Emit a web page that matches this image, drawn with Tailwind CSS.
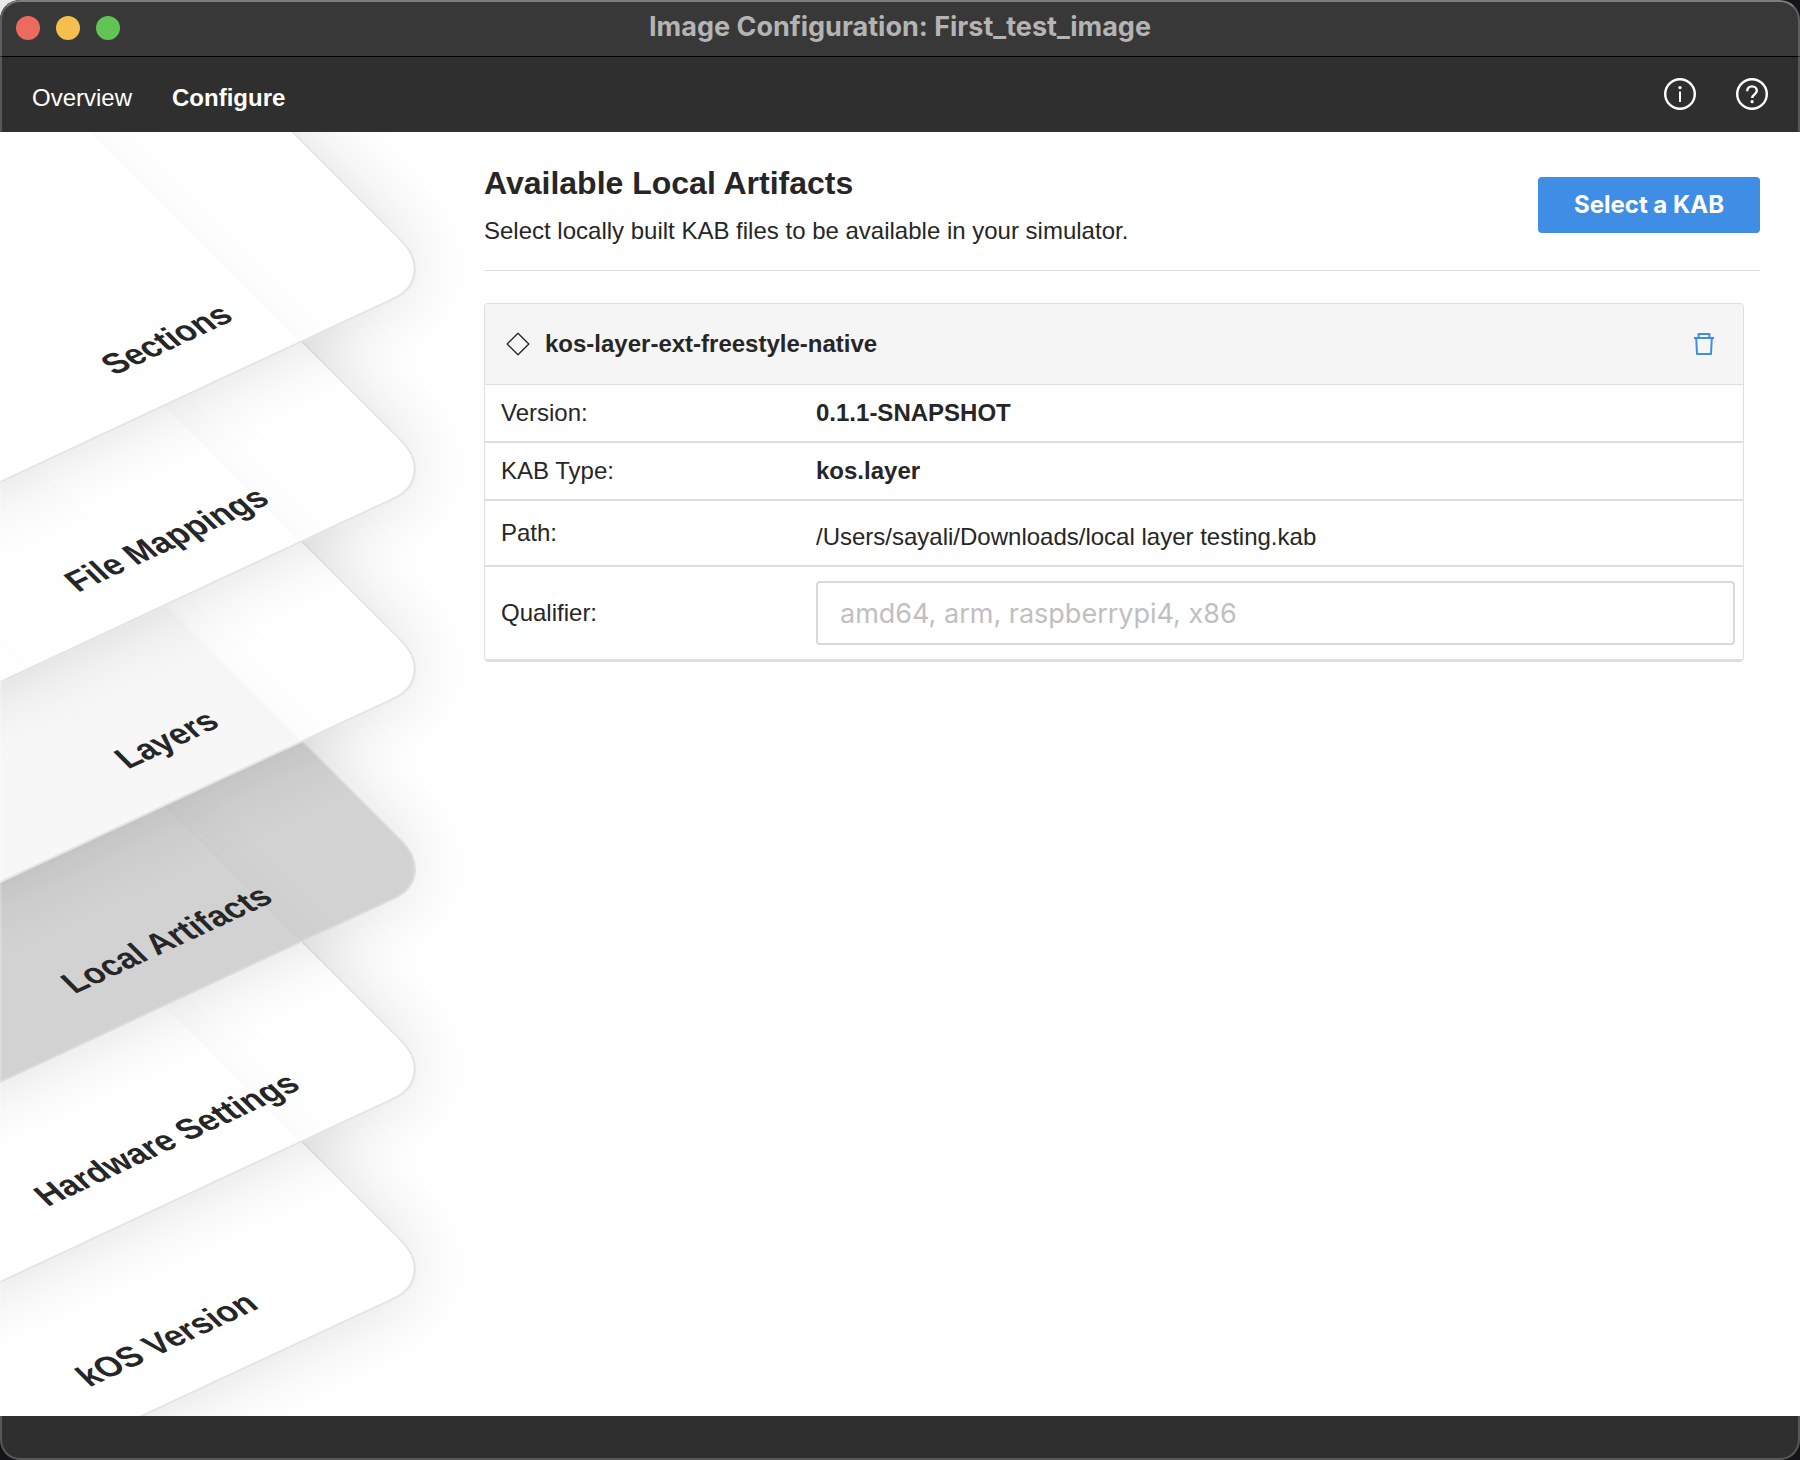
<!DOCTYPE html>
<html lang="en">
<head>
<meta charset="utf-8">
<meta name="viewport" content="width=device-width, initial-scale=1">
<title>Image Configuration: First_test_image</title>
<script src="https://cdn.jsdelivr.net/npm/@tailwindcss/browser@4"></script>
</head>
<body class="bg-[linear-gradient(135deg,#e8e8e8_0_40px,#141416_40px)] font-['Liberation_Sans',Arial,sans-serif] text-2xl text-[#262626]">
<div class="relative flex min-h-screen flex-col overflow-hidden rounded-[20px] bg-[#2f2f2f]">

  <!-- Title bar -->
  <header class="grid h-[57px] grid-cols-[1fr_auto_1fr] items-center border-b border-black bg-[#383838] px-4">
    <div class="flex gap-4">
      <button type="button" aria-label="Close" class="size-6 rounded-full bg-[#ed6a5e]"></button>
      <button type="button" aria-label="Minimize" class="size-6 rounded-full bg-[#f5bf4f]"></button>
      <button type="button" aria-label="Zoom" class="size-6 rounded-full bg-[#61c554]"></button>
    </div>
    <div class="pb-0.5 font-['Inter',sans-serif] text-[27px] leading-8 font-bold text-[#b4b4b4]">Image Configuration: First_test_image</div>
  </header>

  <!-- App navigation -->
  <nav class="flex h-[75px] items-center justify-between px-8 text-white">
    <div class="flex gap-10 pt-1.5 leading-8">
      <a href="#">Overview</a>
      <a href="#" class="font-bold">Configure</a>
    </div>
    <div class="flex gap-10 pb-0.5">
      <button type="button" aria-label="Information">
        <svg class="size-8" viewBox="0 0 32 32" fill="none" stroke="currentColor"><circle cx="16" cy="16" r="14.8" stroke-width="2.4"/><path d="M16 13.6V24" stroke-width="2"/><circle cx="16" cy="9.6" r="1.7" fill="currentColor" stroke="none"/></svg>
      </button>
      <button type="button" aria-label="Help">
        <svg class="size-8" viewBox="0 0 32 32" fill="none" stroke="currentColor"><circle cx="16" cy="16" r="14.8" stroke-width="2.4"/><path d="M11.2 13.200c0-2.900 2-4.800 4.800-4.800s4.800 1.800 4.800 4.400c0 3.600-4.600 3.500-4.600 7.200" stroke-width="2.400"/><circle cx="16.100" cy="23.700" r="1.600" fill="currentColor" stroke="none"/></svg>
      </button>
    </div>
  </nav>

  <main class="flex flex-1 overflow-hidden bg-white">
    <!-- Stack of slanted sheets, the first one on top -->
    <nav aria-label="Configuration sections" class="w-[484px] shrink-0">
      <ul class="-mt-[54px] flex w-[440px] flex-col text-[32px] leading-9 font-bold">
        <li class="relative z-60 flex h-[200px] items-end justify-end">
          <button type="button" class="flex size-[640px] shrink-0 origin-bottom-right -rotate-25 skew-x-20 items-end justify-end rounded-[50px] border-2 border-[#e4e4e4] bg-white/82 pb-10 shadow-[0_0_70px_rgba(0,0,0,0.13)]"><span class="w-[500px] text-center">Sections</span></button>
        </li>
        <li class="relative z-50 flex h-[200px] items-end justify-end">
          <button type="button" class="flex size-[640px] shrink-0 origin-bottom-right -rotate-25 skew-x-20 items-end justify-end rounded-[50px] border-2 border-[#e4e4e4] bg-white/82 pb-10 shadow-[0_0_70px_rgba(0,0,0,0.13)]"><span class="w-[500px] text-center">File Mappings</span></button>
        </li>
        <li class="relative z-40 flex h-[200px] items-end justify-end">
          <button type="button" class="flex size-[640px] shrink-0 origin-bottom-right -rotate-25 skew-x-20 items-end justify-end rounded-[50px] border-2 border-[#e4e4e4] bg-white/82 pb-10 shadow-[0_0_70px_rgba(0,0,0,0.13)]"><span class="w-[500px] text-center">Layers</span></button>
        </li>
        <li class="relative z-30 flex h-[200px] items-end justify-end">
          <button type="button" aria-current="page" class="flex size-[640px] shrink-0 origin-bottom-right -rotate-25 skew-x-20 items-end justify-end rounded-[50px] border-2 border-[#dcdcdc] bg-[#c8c8c8]/82 pb-10 shadow-[0_0_70px_rgba(0,0,0,0.13)]"><span class="w-[500px] text-center">Local Artifacts</span></button>
        </li>
        <li class="relative z-20 flex h-[200px] items-end justify-end">
          <button type="button" class="flex size-[640px] shrink-0 origin-bottom-right -rotate-25 skew-x-20 items-end justify-end rounded-[50px] border-2 border-[#e4e4e4] bg-white/82 pb-10 shadow-[0_0_70px_rgba(0,0,0,0.13)]"><span class="w-[500px] text-center">Hardware Settings</span></button>
        </li>
        <li class="relative z-10 flex h-[200px] items-end justify-end">
          <button type="button" class="flex size-[640px] shrink-0 origin-bottom-right -rotate-25 skew-x-20 items-end justify-end rounded-[50px] border-2 border-[#e4e4e4] bg-white/82 pb-10 shadow-[0_0_70px_rgba(0,0,0,0.13)]"><span class="w-[500px] text-center">kOS Version</span></button>
        </li>
      </ul>
    </nav>

    <section class="min-w-0 flex-1 pt-[31px] pr-10">
      <div class="flex items-center justify-between border-b border-[#dedede] pb-[23px]">
        <div class="flex flex-col gap-3">
          <h1 class="text-[32px] leading-10 font-bold">Available Local Artifacts</h1>
          <p class="leading-8">Select locally built KAB files to be available in your simulator.</p>
        </div>
        <button type="button" class="h-14 w-[222px] rounded bg-[#3f8de5] font-['Inter',sans-serif] font-bold text-white">Select a KAB</button>
      </div>

      <article class="mt-8 mr-4 overflow-hidden rounded border border-[#dedede]">
        <div class="flex h-[81px] items-center gap-[15px] border-b border-[#dedede] bg-[#f5f5f5] pr-7 pl-[21px]">
          <svg class="size-6" viewBox="0 0 24 24" fill="none" stroke="currentColor" stroke-width="1.300"><path d="M12 1.200 22.800 12 12 22.800 1.200 12Z" stroke-linejoin="round"/></svg>
          <h2 class="flex-1 leading-8 font-bold">kos-layer-ext-freestyle-native</h2>
          <button type="button" aria-label="Delete artifact" class="text-[#3f8de5]">
            <svg class="h-6 w-[22px]" viewBox="0 0 22 24" fill="none" stroke="currentColor" stroke-width="2"><path d="M1 6h20M5.600 6V2h10.800v4M3.200 6l.8 16h14l.8-16" stroke-linejoin="round"/></svg>
          </button>
        </div>
        <table class="w-full table-fixed border-separate border-spacing-0 text-left leading-8">
          <colgroup><col class="w-[331px]"><col></colgroup>
          <tbody>
            <tr class="h-[58px] *:border-b-2 *:border-[#dedede]">
              <th scope="row" class="pl-4 font-normal">Version:</th>
              <td class="font-bold">0.1.1-SNAPSHOT</td>
            </tr>
            <tr class="h-[58px] *:border-b-2 *:border-[#dedede]">
              <th scope="row" class="pl-4 font-normal">KAB Type:</th>
              <td class="font-bold">kos.layer</td>
            </tr>
            <tr class="h-[66px] *:border-b-2 *:border-[#dedede]">
              <th scope="row" class="pl-4 font-normal">Path:</th>
              <td class="pt-2">/Users/sayali/Downloads/local layer testing.kab</td>
            </tr>
            <tr class="h-[94px] *:border-b-2 *:border-[#dedede]">
              <th scope="row" class="pl-4 font-normal"><label for="qualifier">Qualifier:</label></th>
              <td class="pr-2"><input id="qualifier" type="text" placeholder="amd64, arm, raspberrypi4, x86" class="block h-16 w-full rounded border-2 border-[#d9d9d9] bg-white px-[22px] font-['Inter',sans-serif] text-[27px] placeholder:text-[#bfbfbf]"></td>
            </tr>
          </tbody>
        </table>
      </article>
    </section>
  </main>

  <footer class="h-11"></footer>

  <!-- Window edge highlight -->
  <div class="pointer-events-none absolute inset-0 z-70 rounded-[20px] border-2 border-white/20 border-t-white/35"></div>
</div>
</body>
</html>
